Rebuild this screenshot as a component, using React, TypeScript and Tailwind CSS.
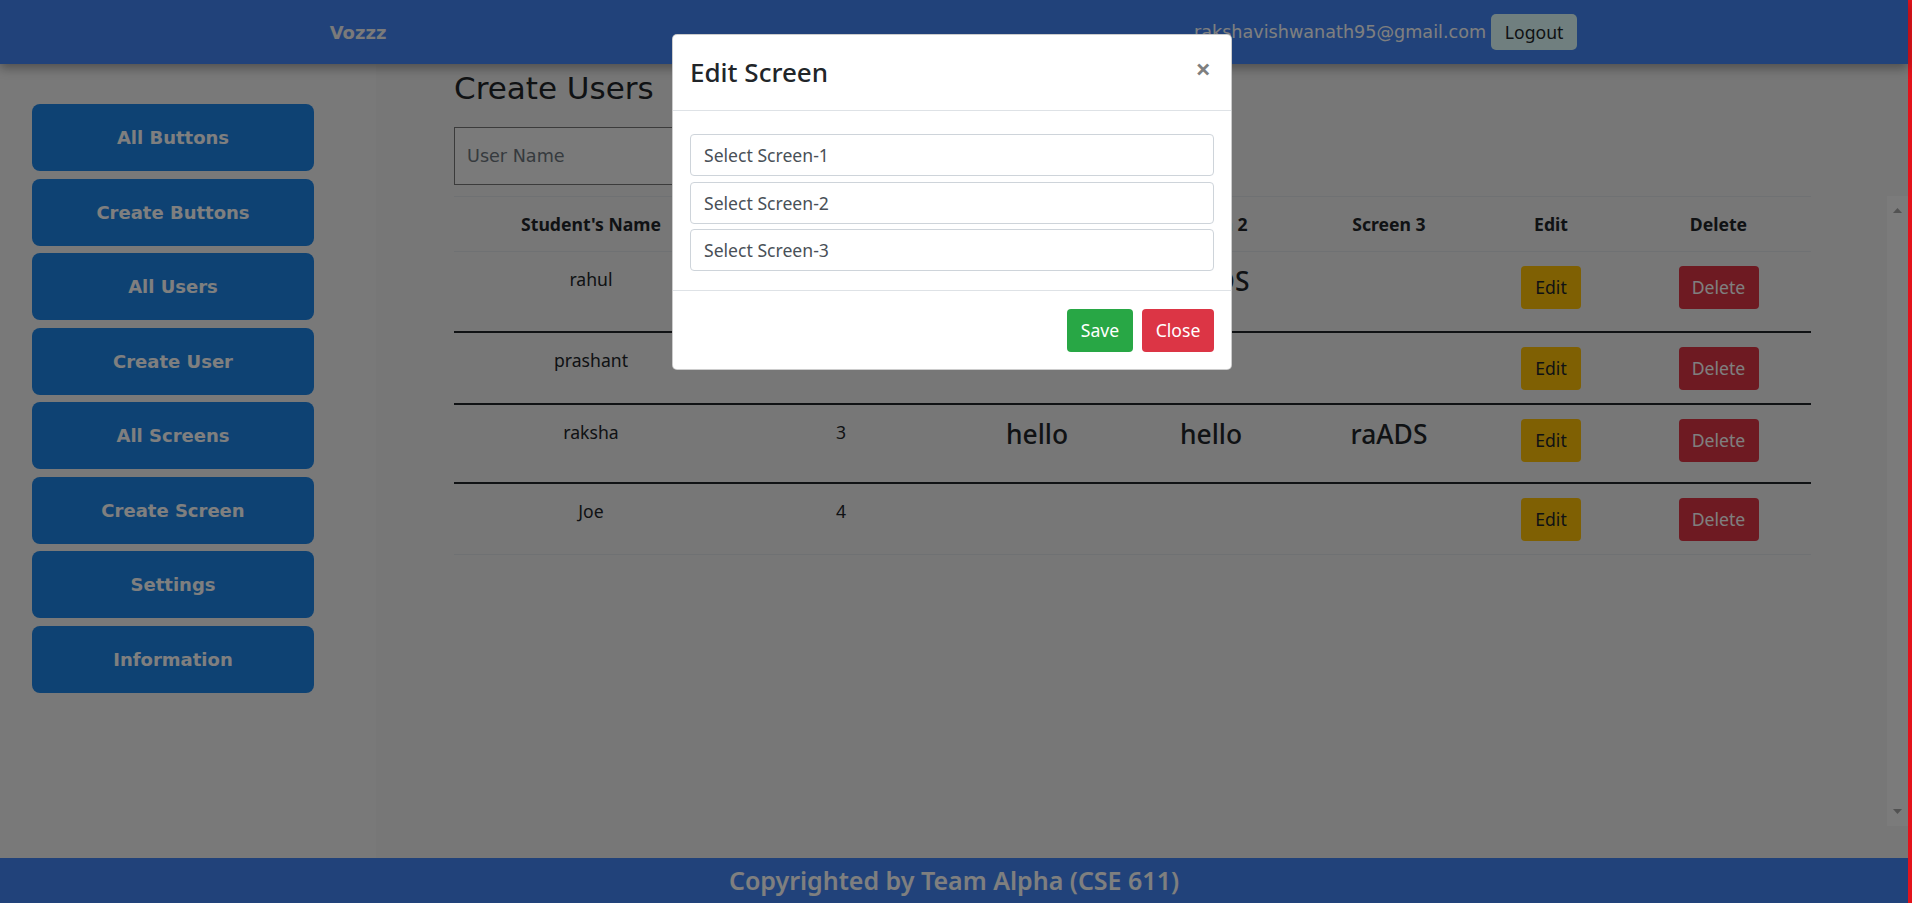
import React from 'react'

type Row = { name: string; id: string; s1: string; s2: string; s3: string; h: string }

const NAV = ['All Buttons', 'Create Buttons', 'All Users', 'Create User', 'All Screens', 'Create Screen', 'Settings', 'Information']

const ROWS: Row[] = [
  { name: 'rahul', id: '1', s1: 'hello', s2: 'raADS', s3: '', h: 'h-[81px] border-b-2 border-[#212529]' },
  { name: 'prashant', id: '2', s1: '', s2: '', s3: '', h: 'h-[72px] border-b-2 border-[#212529]' },
  { name: 'raksha', id: '3', s1: 'hello', s2: 'hello', s3: 'raADS', h: 'h-[79px] border-b-2 border-[#212529]' },
  { name: 'Joe', id: '4', s1: '', s2: '', s3: '', h: 'h-[71px] border-b border-[#dee2e6]' },
]

const COLS = ['w-[274px]', 'w-[226px]', 'w-[166px]', 'w-[182px]', 'w-[174px]', 'w-[150px]', 'w-[185px]']
const HEADS = ["Student's Name", 'Student ID', 'Screen 1', 'Screen 2', 'Screen 3', 'Edit', 'Delete']

const sans = "font-['Noto_Sans',sans-serif]"
const verdana = "font-['DejaVu_Sans',Verdana,sans-serif]"

function Cell({ children, big, className = '' }: { children?: React.ReactNode; big?: boolean; className?: string }) {
  return (
    <td className={`p-0 align-top text-center ${className}`}>
      <div
        className={`pt-[14px] ${big ? 'text-[26.4px] font-medium leading-[1.2]' : 'text-[17.6px] leading-[26px]'}`}
      >
        {children}
      </div>
    </td>
  )
}

function UsersTable() {
  return (
    <table className={`self-start border-separate border-spacing-0 table-fixed w-[1357px] text-[#212529] ${sans}`}>
      <colgroup>
        {COLS.map((c) => (
          <col key={c} className={c} />
        ))}
      </colgroup>
      <thead>
        <tr>
          {HEADS.map((h) => (
            <th
              key={h}
              className="h-[56px] p-0 border-t border-b border-[#dee2e6] text-[17.6px] font-bold text-center align-middle"
            >
              {h}
            </th>
          ))}
        </tr>
      </thead>
      <tbody>
        {ROWS.map((r) => (
          <tr key={r.name}>
            <Cell className={r.h}>{r.name}</Cell>
            <Cell className={r.h}>{r.id}</Cell>
            <Cell className={r.h} big>{r.s1}</Cell>
            <Cell className={r.h} big>{r.s2}</Cell>
            <Cell className={r.h} big>{r.s3}</Cell>
            <td className={`p-0 align-top text-center ${r.h}`}>
              <div className="pt-[14px] flex justify-center">
                <button className="h-[43px] w-[60px] rounded-[4px] bg-[#ffc107] text-[#212529] text-[17.6px]">Edit</button>
              </div>
            </td>
            <td className={`p-0 align-top text-center ${r.h}`}>
              <div className="pt-[14px] flex justify-center">
                <button className="h-[43px] w-[80px] rounded-[4px] bg-[#dc3545] text-white text-[17.6px]">Delete</button>
              </div>
            </td>
          </tr>
        ))}
      </tbody>
    </table>
  )
}

function Arrow({ down }: { down?: boolean }) {
  return (
    <svg width="9" height="5" viewBox="0 0 9 5" className="fill-[#a4a4a4]">
      {down ? <polygon points="0,0 9,0 4.5,5" /> : <polygon points="0,5 9,5 4.5,0" />}
    </svg>
  )
}

function EditScreenModal() {
  return (
    <div className="absolute inset-0 z-50 flex justify-center pt-[34px] pr-[4px]">
      <div className={`w-[560px] h-fit bg-white rounded-[5px] border border-black/20 ${sans} text-[#212529]`}>
        <div className="h-[76px] flex items-center justify-between pl-[17px] pr-[20px] border-b border-[#dee2e6]">
          <h5 className="text-[26px] font-medium">Edit Screen</h5>
          <span className="text-[27px] font-bold text-black/50 leading-none -mt-[8px]">×</span>
        </div>
        <div className="px-[17px] pt-[23px] pb-[19px] flex flex-col gap-[5.5px]">
          {['Select Screen-1', 'Select Screen-2', 'Select Screen-3'].map((p) => (
            <input
              key={p}
              placeholder={p}
              className="h-[42px] w-full rounded-[4px] border border-[#ced4da] px-[13px] text-[17.6px] text-[#495057] placeholder:text-[#495057] outline-none"
            />
          ))}
        </div>
        <div className="border-t border-[#dee2e6] px-[17px] pt-[18px] pb-[17px] flex justify-end gap-[9px]">
          <button className="h-[43px] w-[66px] rounded-[4px] bg-[#28a745] text-white text-[17.6px]">Save</button>
          <button className="h-[43px] w-[72px] rounded-[4px] bg-[#dc3545] text-white text-[17.6px]">Close</button>
        </div>
      </div>
    </div>
  )
}

export default function App() {
  return (
    <div className="flex h-screen w-full overflow-hidden">
      <div className="relative flex-1 flex flex-col bg-[#eeeeee]">
        <header className={`relative z-10 h-[64px] shrink-0 flex items-center bg-[#4285f4] shadow-[0_4px_10px_rgba(0,0,0,0.35)] ${verdana}`}>
          <div className="w-[716px] text-center text-[18px] font-bold text-[#f4f4f4]">Vozzz</div>
          <div className="ml-[478px] flex items-center">
            <span className="text-[17.6px] text-white">rakshavishwanath95@gmail.com</span>
            <button className={`ml-[5px] h-[36px] w-[86px] rounded-[5px] bg-[#e0ffff] text-[#212529] text-[17.6px] ${sans}`}>
              Logout
            </button>
          </div>
        </header>

        <div className="flex-1 flex min-h-0">
          <aside className={`w-[376px] shrink-0 bg-[#f2f2f2] pt-10 px-8 flex flex-col gap-[7.5px] ${verdana}`}>
            {NAV.map((n) => (
              <button
                key={n}
                className="h-[67px] w-[282px] rounded-[8px] bg-[#1c84e6] text-white text-[18px] font-bold"
              >
                {n}
              </button>
            ))}
          </aside>

          <main className="flex-1 flex flex-col pl-[78px] pt-[5px] pb-[32px] min-w-0">
            <h2 className={`text-[31px] leading-[38px] text-[#212529] ${verdana}`}>Create Users</h2>
            <input
              placeholder="User Name"
              className={`mt-[20px] h-[58px] w-[560px] border border-[#767676] bg-[#f4f4f4] px-[12px] text-[17.6px] placeholder:text-[#6c757d] ${verdana}`}
            />
            <div className="mt-[11px] flex-1 flex min-h-0">
              <UsersTable />
              <div className="ml-auto w-[21px] bg-[#f6f6f6] flex flex-col items-center justify-between py-[12px]">
                <Arrow />
                <Arrow down />
              </div>
            </div>
          </main>
        </div>

        <footer className={`h-[45px] shrink-0 flex items-center justify-center bg-[#4285f4] ${sans}`}>
          <span className="text-[25px] font-semibold text-white">Copyrighted by Team Alpha (CSE 611)</span>
        </footer>

        <div className="absolute inset-0 z-40 bg-black/50" />
        <EditScreenModal />
      </div>
      <div className="w-[4px] shrink-0 bg-[#e3131b]" />
    </div>
  )
}
